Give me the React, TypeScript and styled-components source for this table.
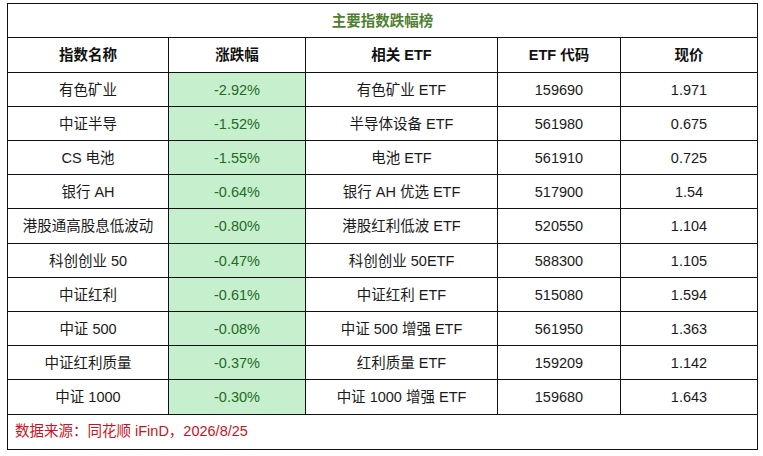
import React from "react";
import styled, { createGlobalStyle } from "styled-components";

const Global = createGlobalStyle`
  html, body { margin: 0; padding: 0; background: #ffffff; }
  body {
    padding: 3px 0 0 7px;
    font-family: "Liberation Sans", "Noto Sans CJK SC", sans-serif;
  }
`;

const Table = styled.table`
  border-collapse: collapse;
  table-layout: fixed;
  width: 750px;
  font-size: 14.5px;
  line-height: 16px;
  color: #1a1a1a;
`;

const Row = styled.tr<{ $h: number }>`
  height: ${(p) => p.$h}px;
`;

const Cell = styled.td<{ $good?: boolean }>`
  border: 1px solid #111;
  padding: 0;
  text-align: center;
  vertical-align: middle;
  white-space: nowrap;
  background: ${(p) => (p.$good ? "#c6efce" : "#ffffff")};
  color: ${(p) => (p.$good ? "#1f6b1f" : "#1a1a1a")};
`;

const TitleCell = styled.td`
  border: 1px solid #111;
  padding: 0;
  text-align: center;
  font-weight: bold;
  color: #4f7f30;
`;

const HeadCell = styled.th`
  border: 1px solid #111;
  padding: 0;
  text-align: center;
  font-weight: bold;
  color: #111;
`;

const FootCell = styled.td`
  border: 1px solid #111;
  padding: 0 0 2px 7px;
  text-align: left;
  color: #c8141e;
`;

const rows: [string, string, string, string, string][] = [
  ["有色矿业", "-2.92%", "有色矿业 ETF", "159690", "1.971"],
  ["中证半导", "-1.52%", "半导体设备 ETF", "561980", "0.675"],
  ["CS 电池", "-1.55%", "电池 ETF", "561910", "0.725"],
  ["银行 AH", "-0.64%", "银行 AH 优选 ETF", "517900", "1.54"],
  ["港股通高股息低波动", "-0.80%", "港股红利低波 ETF", "520550", "1.104"],
  ["科创创业 50", "-0.47%", "科创创业 50ETF", "588300", "1.105"],
  ["中证红利", "-0.61%", "中证红利 ETF", "515080", "1.594"],
  ["中证 500", "-0.08%", "中证 500 增强 ETF", "561950", "1.363"],
  ["中证红利质量", "-0.37%", "红利质量 ETF", "159209", "1.142"],
  ["中证 1000", "-0.30%", "中证 1000 增强 ETF", "159680", "1.643"],
];

export default function App() {
  return (
    <>
      <Global />
      <Table>
        <colgroup>
          <col style={{ width: 161 }} />
          <col style={{ width: 137 }} />
          <col style={{ width: 192 }} />
          <col style={{ width: 123 }} />
          <col style={{ width: 137 }} />
        </colgroup>
        <tbody>
          <Row $h={34}>
            <TitleCell colSpan={5}>主要指数跌幅榜</TitleCell>
          </Row>
          <Row $h={35}>
            <HeadCell>指数名称</HeadCell>
            <HeadCell>涨跌幅</HeadCell>
            <HeadCell>相关 ETF</HeadCell>
            <HeadCell>ETF 代码</HeadCell>
            <HeadCell>现价</HeadCell>
          </Row>
          {rows.map((r, i) => (
            <Row key={r[0]} $h={i % 5 === 4 ? 35 : 34}>
              <Cell>{r[0]}</Cell>
              <Cell $good>{r[1]}</Cell>
              <Cell>{r[2]}</Cell>
              <Cell>{r[3]}</Cell>
              <Cell>{r[4]}</Cell>
            </Row>
          ))}
          <Row $h={35}>
            <FootCell colSpan={5}>数据来源：同花顺 iFinD，2026/8/25</FootCell>
          </Row>
        </tbody>
      </Table>
    </>
  );
}
